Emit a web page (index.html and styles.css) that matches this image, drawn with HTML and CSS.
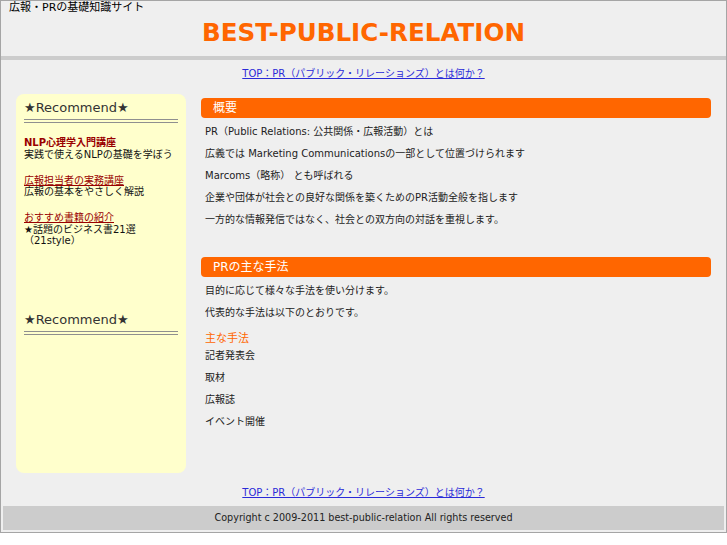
FILE: index.html
```html
<!DOCTYPE html>
<html lang="ja">
<head>
<meta charset="utf-8">
<title>BEST-PUBLIC-RELATION</title>
<link rel="stylesheet" href="styles.css">
</head>
<body>
<div class="page">
  <header class="header">
    <p class="tagline">広報・PRの基礎知識サイト</p>
    <h1 class="title">BEST-PUBLIC-RELATION</h1>
  </header>
  <nav class="nav"><a href="#">TOP：PR（パブリック・リレーションズ）とは何か？</a></nav>
  <div class="columns">
    <aside class="sidebar">
      <h2 class="side-title">★Recommend★</h2>
      <ul class="rec-list">
        <li><a class="rec-strong" href="#">NLP心理学入門講座</a><span class="rec-desc">実践で使えるNLPの基礎を学ぼう</span></li>
        <li><a class="rec-link" href="#">広報担当者の実務講座</a><span class="rec-desc">広報の基本をやさしく解説</span></li>
        <li><a class="rec-link" href="#">おすすめ書籍の紹介</a><span class="rec-desc">★話題のビジネス書21選<br>（21style）</span></li>
      </ul>
      <h2 class="side-title second">★Recommend★</h2>
    </aside>
    <main class="main">
      <section class="section">
        <h2 class="bar">概要</h2>
        <p>PR（Public Relations: 公共関係・広報活動）とは</p>
        <p>広義では Marketing Communicationsの一部として位置づけられます</p>
        <p>Marcoms（略称） とも呼ばれる</p>
        <p>企業や団体が社会との良好な関係を築くためのPR活動全般を指します</p>
        <p>一方的な情報発信ではなく、社会との双方向の対話を重視します。</p>
      </section>
      <section class="section second">
        <h2 class="bar">PRの主な手法</h2>
        <p>目的に応じて様々な手法を使い分けます。</p>
        <p>代表的な手法は以下のとおりです。</p>
        <h3 class="sub">主な手法</h3>
        <p>記者発表会</p>
        <p>取材</p>
        <p>広報誌</p>
        <p>イベント開催</p>
      </section>
    </main>
  </div>
  <nav class="nav footer-nav"><a href="#">TOP：PR（パブリック・リレーションズ）とは何か？</a></nav>
  <footer class="copyright">Copyright c 2009-2011 best-public-relation All rights reserved</footer>
</div>
</body>
</html>
```

FILE: styles.css
```css
* { box-sizing: border-box; }
html, body { margin: 0; padding: 0; background: #ffffff; }
body {
  font-family: "DejaVu Sans", "Noto Sans CJK JP", sans-serif;
  color: #333333;
}
.page {
  width: 727px;
  border: 1px solid #a5a5a5;
  background: #efefef;
  padding-bottom: 2px;
}
.header {
  height: 59px;
  padding: 0 8px;
  border-bottom: 4px solid #cccccc;
}
.tagline {
  margin: 0;
  font-size: 11px;
  line-height: 13px;
  color: #000000;
}
.title {
  margin: 5px 0 0;
  font-size: 24.6px;
  line-height: 28px;
  font-weight: bold;
  color: #ff6600;
  text-align: center;
}
.nav {
  margin-top: 8px;
  font-size: 10px;
  line-height: 12px;
  text-align: center;
}
.nav a { color: #2a2ad8; text-decoration: underline; }
.columns {
  display: flex;
  gap: 15px;
  padding: 0 15px;
  margin-top: 14px;
}
.sidebar {
  width: 170px;
  height: 379px;
  flex: none;
  background: #ffffcc;
  border-radius: 8px;
  padding: 6px 8px;
}
.side-title {
  margin: 0;
  font-size: 13px;
  line-height: 16px;
  font-weight: normal;
  color: #333333;
  padding-bottom: 3px;
  border-bottom: 4px double #8f8f8f;
}
.side-title.second { margin-top: 65px; }
.rec-list {
  list-style: none;
  margin: 14px 0 0;
  padding: 0;
}
.rec-list li {
  font-size: 10px;
  line-height: 11.5px;
  margin-bottom: 14.5px;
}
.rec-list li:last-child { margin-bottom: 0; }
.rec-strong {
  display: block;
  color: #990000;
  font-weight: bold;
  text-decoration: none;
}
.rec-link {
  display: block;
  color: #990000;
  text-decoration: underline;
}
.rec-desc { display: block; color: #111111; }
.main {
  flex: 1;
  padding-top: 4px;
}
.bar {
  margin: 0 0 2.5px;
  height: 20px;
  line-height: 20px;
  padding-left: 12px;
  background: #ff6600;
  border-radius: 4px;
  color: #ffffff;
  font-size: 12px;
  font-weight: normal;
}
.section p {
  margin: 0;
  padding-left: 4px;
  font-size: 10px;
  line-height: 22px;
  color: #222222;
}
.section.second { margin-top: 26.5px; }
.section.second .bar { margin-bottom: 3px; }
.sub {
  margin: 9px 0 0;
  padding-left: 4px;
  font-size: 11px;
  line-height: 12px;
  font-weight: normal;
  color: #ff6600;
}
.footer-nav { margin-top: 14px; }
.copyright {
  margin: 7px 2px 0;
  height: 24px;
  line-height: 24px;
  background: #cccccc;
  text-align: center;
  font-family: "DejaVu Sans Condensed", "DejaVu Sans", sans-serif;
  font-stretch: condensed;
  font-size: 10.7px;
  color: #222222;
}
```
